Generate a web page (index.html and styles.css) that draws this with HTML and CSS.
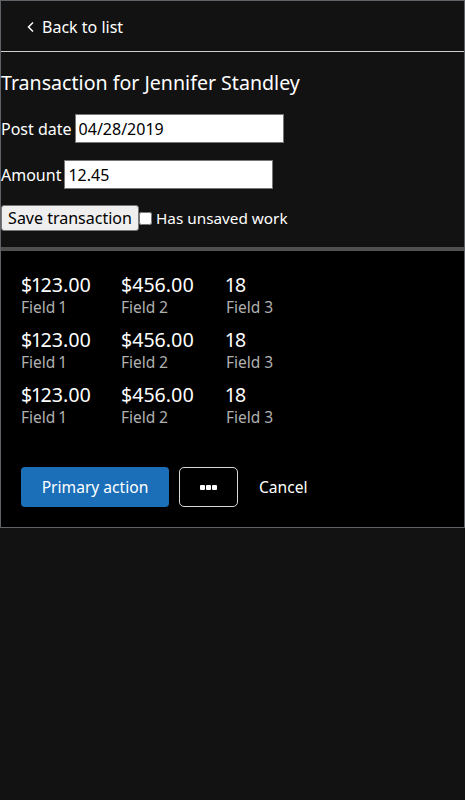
FILE: index.html
```html
<!DOCTYPE html>
<html lang="en">
<head>
<meta charset="utf-8">
<title>Transaction</title>
<link rel="stylesheet" href="styles.css">
</head>
<body>
<div class="frame">
  <header class="topbar">
    <a class="back" href="#">
      <svg class="chev" width="10" height="12" viewBox="0 0 10 12"><path d="M7 1.5 L2.5 6 L7 10.5" fill="none" stroke="#fff" stroke-width="1.5"/></svg>
      <span>Back to list</span>
    </a>
  </header>
  <section class="form">
    <h1 class="title">Transaction for Jennifer Standley</h1>
    <div class="field"><label>Post date</label> <input class="txt date" type="text" value="04/28/2019"></div>
    <div class="field"><label>Amount</label> <input class="txt amount" type="text" value="12.45"></div>
    <div class="actions-row">
      <button class="save">Save transaction</button>
      <label class="check"><input type="checkbox"><span>Has unsaved work</span></label>
    </div>
  </section>
  <section class="panel">
    <div class="grid">
      <div class="row">
        <div class="cell c1"><div class="val">$123.00</div><div class="lbl">Field 1</div></div>
        <div class="cell c2"><div class="val">$456.00</div><div class="lbl">Field 2</div></div>
        <div class="cell c3"><div class="val">18</div><div class="lbl">Field 3</div></div>
      </div>
      <div class="row">
        <div class="cell c1"><div class="val">$123.00</div><div class="lbl">Field 1</div></div>
        <div class="cell c2"><div class="val">$456.00</div><div class="lbl">Field 2</div></div>
        <div class="cell c3"><div class="val">18</div><div class="lbl">Field 3</div></div>
      </div>
      <div class="row">
        <div class="cell c1"><div class="val">$123.00</div><div class="lbl">Field 1</div></div>
        <div class="cell c2"><div class="val">$456.00</div><div class="lbl">Field 2</div></div>
        <div class="cell c3"><div class="val">18</div><div class="lbl">Field 3</div></div>
      </div>
    </div>
    <div class="buttons">
      <button class="primary">Primary action</button>
      <button class="more" aria-label="More"><span class="dots"><i></i><i></i><i></i></span></button>
      <button class="cancel">Cancel</button>
    </div>
  </section>
</div>
</body>
</html>
```
FILE: styles.css
```css
html, body {
  margin: 0;
  padding: 0;
  background: #121212;
  color: #fff;
  font-family: "Noto Sans", "DejaVu Sans", sans-serif;
  font-variant-numeric: proportional-nums;
}
.frame {
  width: 465px;
  box-sizing: border-box;
  border: 1px solid #5f6368;
}
.topbar {
  box-sizing: border-box;
  height: 51px;
  display: flex;
  align-items: center;
  padding: 2px 0 0 25px;
  border-bottom: 1px solid #d0d0d0;
}
.back {
  display: flex;
  align-items: center;
  gap: 6px;
  color: #fff;
  text-decoration: none;
  font-size: 16px;
}
.chev { display: block; }
.form {
  padding-bottom: 16px;
}
.title {
  margin: 0;
  padding-top: 16px;
  font-size: 19.6px;
  font-weight: 400;
  line-height: 30px;
}
.field {
  display: flex;
  align-items: center;
  gap: 3px;
  font-size: 16px;
  margin-top: 16px;
}
.field + .field { margin-top: 17px; }
.txt {
  box-sizing: border-box;
  height: 29px;
  border: 1px solid #767676;
  background: #fff;
  color: #000;
  font-family: "Noto Sans", sans-serif;
  font-size: 16px;
  padding: 1px 3px;
  margin: 0;
}
.date { width: 209px; }
.amount { width: 209px; }
.actions-row {
  display: flex;
  align-items: center;
  margin-top: 16px;
  font-size: 16px;
}
.save {
  box-sizing: border-box;
  height: 26px;
  width: 138px;
  padding: 0 6px;
  background: #efefef;
  color: #000;
  border: 1px solid #767676;
  border-radius: 3px;
  font-family: "Noto Sans", sans-serif;
  font-size: 16px;
  margin: 0;
}
.check {
  display: flex;
  align-items: center;
  gap: 4px;
  font-size: 15.3px;
}
.check input {
  margin: 0;
  width: 13px;
  height: 13px;
}
.panel {
  background: #000;
  padding: 22px 20px 20px;
  border-top: 4px solid transparent;
  border-image: linear-gradient(#505050, #a8a8a8 60%, #7a7a7a) 1;
  border-left: 0; border-right: 0; border-bottom: 0;
}
.grid {
  display: flex;
  flex-direction: column;
  gap: 11px;
}
.row {
  display: flex;
}
.cell { display: flex; flex-direction: column; }
.c1 { width: 100px; }
.c2 { width: 105px; }
.val {
  font-size: 19.6px;
  line-height: 24px;
  color: #fff;
}
.lbl {
  font-size: 15.5px;
  line-height: 20px;
  color: #b0b0b0;
}
.buttons {
  display: flex;
  align-items: center;
  gap: 10px;
  margin-top: 40px;
}
.buttons button {
  font-family: "Noto Sans", sans-serif;
  font-size: 15.6px;
  margin: 0;
  cursor: pointer;
}
.primary {
  height: 40px;
  width: 148px;
  background: #1b6fb9;
  color: #fff;
  border: 0;
  border-radius: 4px;
}
.more {
  box-sizing: border-box;
  height: 40px;
  width: 59px;
  background: #000;
  border: 1px solid #d8d8d8;
  border-radius: 5px;
  display: flex;
  align-items: center;
  justify-content: center;
}
.dots { display: flex; gap: 1px; }
.dots i {
  display: block;
  width: 5px;
  height: 5px;
  background: #fff;
  border-radius: 1px;
}
.cancel {
  background: transparent;
  border: 0;
  color: #fff;
  padding: 0 11px;
}
```
